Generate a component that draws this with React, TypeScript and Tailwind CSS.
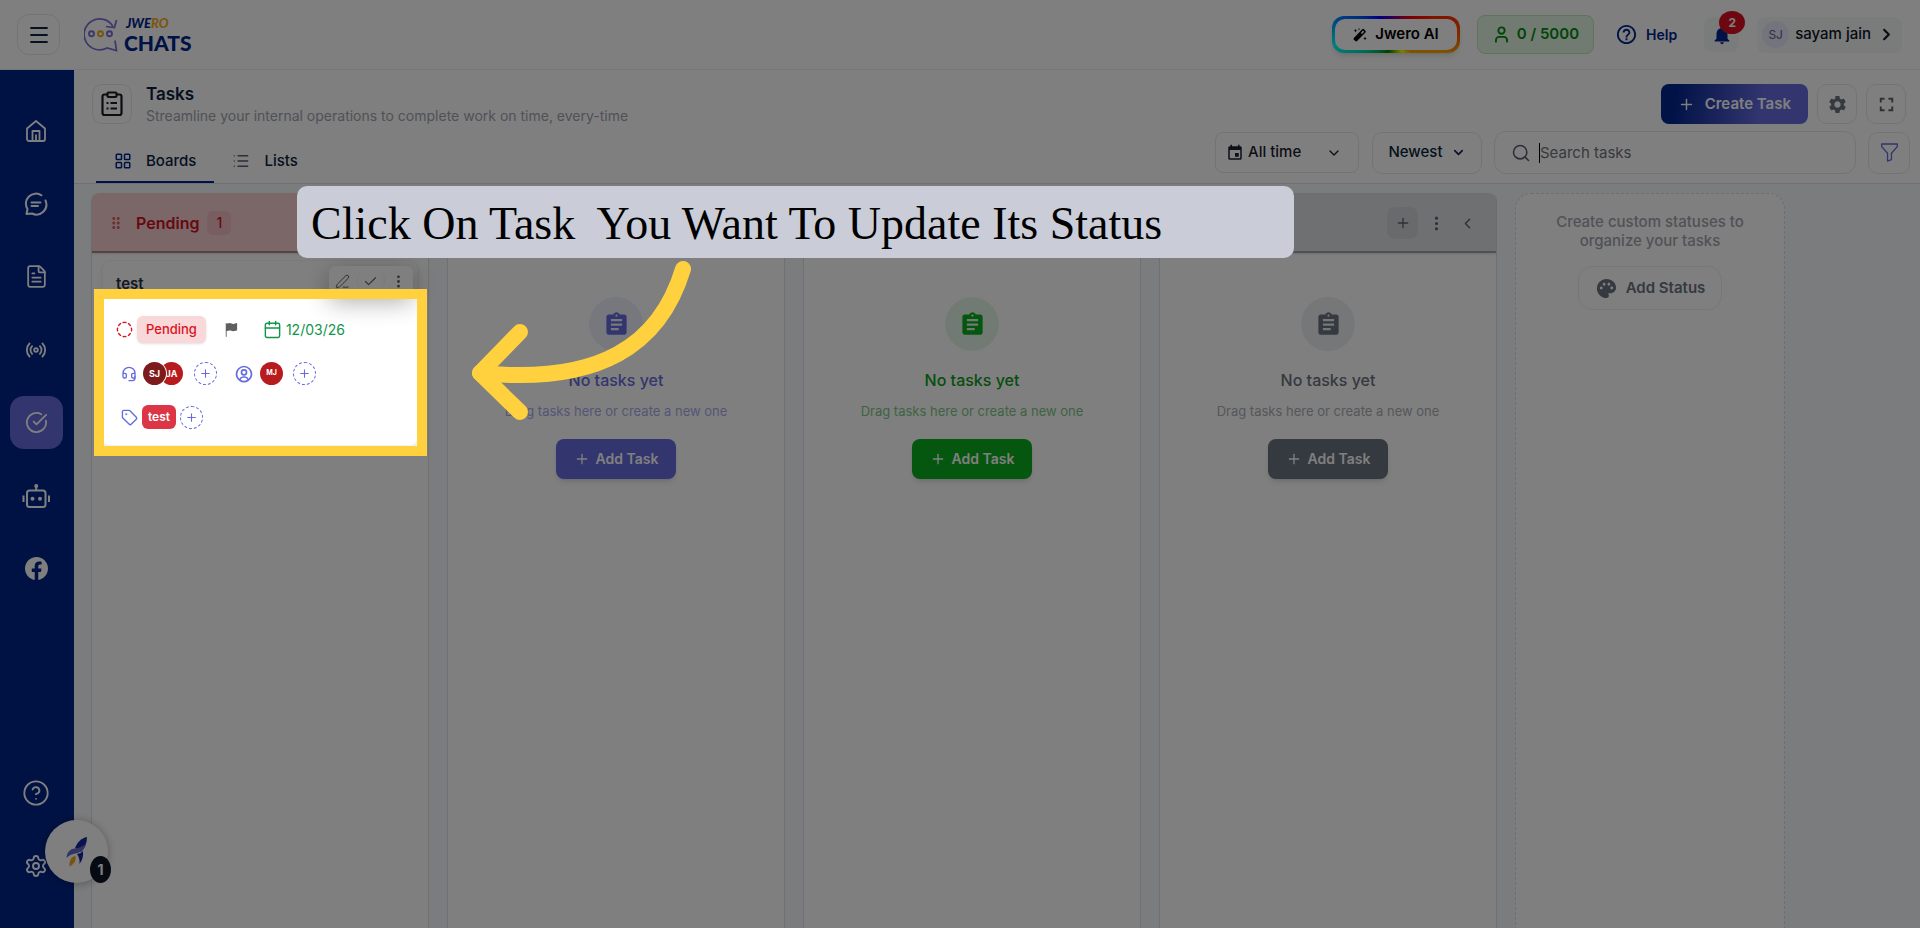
import { useState } from "react";
import type { ReactNode } from "react";
import {
  Calendar,
  Check,
  ChevronDown,
  ChevronLeft,
  ChevronRight,
  CircleCheckBig,
  CircleDashed,
  CircleQuestionMark,
  FileText,
  Headset,
  LayoutGrid,
  List,
  Menu,
  PenLine,
  Plus,
  Radio,
  Search,
  Settings,
  Tag,
  User,
} from "lucide-react";
import { BiUserCircle } from "react-icons/bi";
import { BsFacebook, BsFlagFill, BsFunnel, BsThreeDotsVertical } from "react-icons/bs";
import {
  MdAssignment,
  MdDragIndicator,
  MdEvent,
  MdFullscreen,
  MdHelpOutline,
  MdNotifications,
  MdPalette,
  MdSettings,
} from "react-icons/md";

function HomeIcon() {
  return (
    <svg width="24" height="24" viewBox="0 0 24 24" fill="none" stroke="currentColor" strokeWidth="1.8" strokeLinejoin="round">
      <path d="M3 9.500 12 2l9 7.500V20a2 2 0 0 1-2 2H5a2 2 0 0 1-2-2z" />
      <path d="M8.500 22V12h7v10M12 15.500V22" />
    </svg>
  );
}

function ChatIcon() {
  return (
    <svg width="24" height="24" viewBox="0 0 24 24" fill="none" stroke="currentColor" strokeWidth="2" strokeLinecap="round" strokeLinejoin="round">
      <path d="M21.500 8.500A10 10 0 0 1 8 21.500L2.500 22 3.500 17A10 10 0 0 1 17.500 3.300" />
      <path d="M7.500 10.500h9M7.500 14h6.500" />
    </svg>
  );
}

function BotIcon() {
  return (
    <svg width="28" height="26" viewBox="0 0 28 26" fill="none" stroke="currentColor" strokeWidth="2">
      <rect x="5" y="7.500" width="18.500" height="16.500" rx="2.500" />
      <path d="M14.200 7V3.500M1.500 12.500V19M27 12.500V19" />
      <circle cx="14.200" cy="3" r="1" fill="currentColor" />
      <circle cx="10.500" cy="15.700" r="1" fill="currentColor" />
      <circle cx="18" cy="15.700" r="1" fill="currentColor" />
    </svg>
  );
}

function WandIcon() {
  return (
    <svg width="14" height="14" viewBox="0 0 14 14" fill="currentColor">
      <path d="M9.200 1.300a1.300 1.300 0 0 1 1.800 0l1.400 1.400a1.300 1.300 0 0 1 0 1.800l-8.300 8.600a1.300 1.300 0 0 1-1.800 0L.9 11.700a1.300 1.300 0 0 1 0-1.800zM10 2.600 7.800 4.900l1.200 1.200 2.200-2.300z" fillRule="evenodd" />
      <path d="m2.500.8.500 1.400 1.400.5-1.400.5-.5 1.400L2 3.200.6 2.700 2 2.200zM12 8.500l.5 1.500 1.400.5-1.400.5-.5 1.500-.5-1.500-1.400-.5 1.400-.5zM6 0l.3.8.8.3-.8.3L6 2.200l-.3-.8-.8-.3.8-.3z" />
    </svg>
  );
}

function ClipboardIcon() {
  return (
    <svg width="24" height="26" viewBox="0 0 24 26" fill="none" stroke="currentColor" strokeWidth="2.200" strokeLinejoin="round">
      <path d="M7 3.500H4.500a2 2 0 0 0-2 2V22a2 2 0 0 0 2 2h15a2 2 0 0 0 2-2V5.500a2 2 0 0 0-2-2H17" />
      <rect x="7.500" y="1.500" width="9" height="4.500" rx="1" />
      <path d="M6.500 12h2M6.500 17.500h2M10.500 12H17M10.500 17.500H17" />
    </svg>
  );
}

function Logo() {
  return (
    <a href="#" className="flex items-center gap-1.5" aria-label="Jwero Chats">
      <svg width="34" height="35" viewBox="0 0 34 35" fill="none" stroke="#7a70d8" strokeWidth="1.700">
        <path d="M29 9.500A15.500 15.500 0 1 0 23 31l9.500 2.500L31 23.500" />
        <path d="m22 9.500 8.500 1L32.500 3" />
        <circle cx="7.500" cy="16.700" r="2.500" strokeWidth="1.900" />
        <circle cx="16.500" cy="16.700" r="2.500" stroke="#f0a91b" strokeWidth="1.900" />
        <circle cx="25.500" cy="16.700" r="2.500" strokeWidth="1.900" />
      </svg>
      <span className="font-[Lato,sans-serif] font-black text-[#00248c]">
        <span className="block pl-0.5 text-[13px] leading-4 italic">
          JWE<span className="text-[#f5ad1c]">RO</span>
        </span>
        <span className="block text-[21px] leading-6">CHATS</span>
      </span>
    </a>
  );
}

const navItems = [
  { label: "Home", icon: <HomeIcon /> },
  { label: "Chats", icon: <ChatIcon /> },
  { label: "Templates", icon: <FileText size={25} strokeWidth={1.700} /> },
  { label: "Broadcast", icon: <Radio size={22} /> },
  { label: "Tasks", icon: <CircleCheckBig size={23} strokeWidth={1.900} /> },
  { label: "Bots", icon: <BotIcon /> },
  { label: "Facebook", icon: <BsFacebook size={23} /> },
];

const footerItems = [
  { label: "Help", icon: <CircleQuestionMark size={28} strokeWidth={1.600} /> },
  { label: "Settings", icon: <Settings size={24} strokeWidth={1.900} /> },
];

function NavButton({ label, icon, active = false }: { label: string; icon: ReactNode; active?: boolean }) {
  return (
    <button
      type="button"
      aria-label={label}
      className={`flex h-[53px] w-[53px] items-center justify-center rounded-[14px] ${active ? "bg-[#666bde]" : ""}`}
    >
      {icon}
    </button>
  );
}

function Sidebar() {
  return (
    <nav className="flex w-[74px] shrink-0 flex-col items-center justify-between bg-[#002488] pt-[34px] pr-0.5 pb-9 text-white">
      <div className="flex flex-col gap-5">
        {navItems.map((item) => (
          <NavButton key={item.label} {...item} active={item.label === "Tasks"} />
        ))}
      </div>
      <div className="flex flex-col gap-5">
        {footerItems.map((item) => (
          <NavButton key={item.label} {...item} />
        ))}
      </div>
    </nav>
  );
}

function TopBar() {
  return (
    <header className="flex h-[70px] shrink-0 items-center justify-between border-b border-[#eceef0] pr-[18px] pl-[17px]">
      <div className="flex items-center gap-6">
        <button type="button" aria-label="Menu" className="flex h-[41px] w-[43px] items-center justify-center rounded-xl border border-gray-200 text-[#0b2545]">
          <Menu size={24} strokeWidth={1.800} />
        </button>
        <Logo />
      </div>
      <div className="flex items-center">
        <button
          type="button"
          className="h-[37px] rounded-xl bg-[conic-gradient(from_45deg,#f00_0deg,#ff4500_40deg,#ffa500_65deg,#ffa500_95deg,#ff0_115deg,#008000_160deg,#00ffff_215deg,#0080ff_240deg,#00f_270deg,#f00_360deg)] p-[3px] shadow-md"
        >
          <span className="flex h-full items-center gap-2 rounded-[10px] bg-white px-[18px] text-[15px] font-semibold text-black">
            <WandIcon />
            Jwero AI
          </span>
        </button>
        <div className="ml-[17px] flex h-[39px] items-center gap-1.5 rounded-lg border border-[#b9e6bd] bg-[#e2f7e4] px-[14px] text-[15px] font-semibold text-[#048a0c]">
          <User size={19} strokeWidth={2.400} />
          0 / 5000
        </div>
        <a href="#" className="ml-[21px] flex items-center gap-2 text-sm font-semibold text-[#00248c]">
          <MdHelpOutline size={23} />
          Help
        </a>
        <button type="button" aria-label="Notifications" className="relative ml-[27px] flex size-[35px] items-center justify-center rounded-lg bg-[#f4f8f8] text-[#00248c]">
          <MdNotifications size={22} />
          <span className="absolute -top-1.5 -right-1.5 flex h-[23px] w-[26px] items-center justify-center rounded-[50%] bg-[#dc1020] text-xs font-bold text-white">
            2
          </span>
        </button>
        <button type="button" className="ml-[18px] flex h-9 items-center gap-1.5 rounded-lg bg-[#f4f8f8] pr-1.5 pl-[5px] text-[15px] font-medium text-[#0b1526]">
          <span className="flex size-[27px] items-center justify-center rounded-full bg-[#e6e8fa] text-xs font-normal text-[#5a6180]">SJ</span>
          sayam jain
          <ChevronRight size={19} strokeWidth={2.600} />
        </button>
      </div>
    </header>
  );
}

const iconButton = "flex items-center justify-center rounded-[10px] border border-gray-200";

function PageHeader() {
  const [query, setQuery] = useState("");

  return (
    <div className="flex h-[114px] shrink-0 justify-between border-b border-[#dcdfe6] pl-[18px]">
      <div className="flex flex-col justify-between pt-3.5">
        <div className="flex items-start gap-3.5">
          <div className="flex size-10 items-center justify-center rounded-[10px] border border-gray-200 text-[#1b1d22]">
            <ClipboardIcon />
          </div>
          <div>
            <h1 className="text-[17px] leading-5 font-semibold text-[#0b1f3f]">Tasks</h1>
            <p className="text-sm leading-6 text-[#a0a3ad]">Streamline your internal operations to complete work on time, every-time</p>
          </div>
        </div>
        <div className="ml-1 flex text-[15px] font-medium text-[#0b1f3f]">
          <button type="button" className="flex h-11 items-center gap-3.5 border-b-2 border-[#00248c] px-[18px] pt-0.5">
            <LayoutGrid size={18} className="text-[#00248c]" />
            Boards
          </button>
          <button type="button" className="flex h-11 items-center gap-3.5 px-[18px]">
            <List size={18} strokeWidth={1.700} className="text-[#585c70]" />
            Lists
          </button>
        </div>
      </div>
      <div className="flex flex-col gap-[7px] pt-3.5">
        <div className="flex justify-end gap-[9px] pr-3.5">
          <button
            type="button"
            className="flex h-10 items-center gap-2.5 rounded-lg bg-[linear-gradient(100deg,#00248c_10%,#666bde_68%)] px-[17px] text-[15px] font-semibold text-white"
          >
            <Plus size={17} />
            Create Task
          </button>
          <button type="button" aria-label="Task settings" className={`${iconButton} size-10 text-[#6b7280]`}>
            <MdSettings size={21} />
          </button>
          <button type="button" aria-label="Full screen" className={`${iconButton} size-10 text-[#5b6068]`}>
            <MdFullscreen size={23} />
          </button>
        </div>
        <div className="flex items-center gap-3 pr-2.5">
          <button type="button" className="flex h-[41px] w-[144px] items-center justify-between rounded-lg border border-gray-200 px-2.5 text-[15px] font-medium text-[#1b2030]">
            <span className="flex items-center gap-1">
              <MdEvent size={18} />
              All time
            </span>
            <ChevronDown size={16} className="mr-1.5" />
          </button>
          <button type="button" className={`${iconButton} ml-px h-[42px] w-[110px] gap-2 text-[15px] font-medium text-[#0b1f3f]`}>
            Newest
            <ChevronDown size={15} strokeWidth={2.500} />
          </button>
          <label className="flex h-[43px] w-[362px] items-center gap-2 rounded-xl border border-gray-200 pr-3 pl-4">
            <Search size={20} strokeWidth={1.900} className="text-[#5d5b78]" />
            <span className="flex grow items-center">
              <span className="h-5 w-px bg-black" />
              <input
                type="text"
                aria-label="Search tasks"
                value={query}
                onChange={(e) => setQuery(e.target.value)}
                placeholder="Search tasks"
                className="h-8 w-full text-[15px] leading-6 outline-none placeholder:text-[#70737b]"
              />
            </span>
          </label>
          <button type="button" aria-label="Filter" className={`${iconButton} size-[42px] text-[#666bde]`}>
            <BsFunnel size={21} />
          </button>
        </div>
      </div>
    </div>
  );
}

function ColumnActions() {
  return (
    <div className="flex items-center text-[#5b616c]">
      <button type="button" aria-label="Add task" className="flex h-8 w-[31px] items-center justify-center rounded-lg bg-black/5">
        <Plus size={16} />
      </button>
      <button type="button" aria-label="More" className="ml-2.5">
        <BsThreeDotsVertical size={17} />
      </button>
      <button type="button" aria-label="Collapse" className="ml-3.5">
        <ChevronLeft size={17} />
      </button>
    </div>
  );
}

function AddPerson({ label }: { label: string }) {
  return (
    <button type="button" aria-label={label} className="flex size-[23px] items-center justify-center rounded-full border border-dashed border-[#666bde] text-[#666bde]">
      <Plus size={13} />
    </button>
  );
}

function TaskCard() {
  return (
    <article className="relative mx-2.5 mt-[7px] rounded-lg border border-gray-100 px-[13px] pt-[13px] pb-4 shadow-md">
      <h3 className="text-[15px] leading-5 font-semibold text-[#283044]">test</h3>
      <div className="absolute top-[5px] right-1 flex h-[30px] w-[84px] items-center justify-between rounded-md bg-white pr-[7px] pl-1.5 text-[#5d6066] shadow-[0_6px_24px_rgba(0,0,0,0.32)]">
        <button type="button" aria-label="Edit">
          <PenLine size={15} strokeWidth={1.600} />
        </button>
        <button type="button" aria-label="Complete" className="flex size-7 items-center justify-center rounded-full border-x border-gray-100">
          <Check size={15} strokeWidth={1.700} />
        </button>
        <button type="button" aria-label="More">
          <BsThreeDotsVertical size={15} />
        </button>
      </div>

      <div className="mt-[22px] flex items-center text-sm">
        <CircleDashed size={17} className="text-[#d91420]" />
        <button type="button" className="ml-1 h-[27px] rounded-md bg-[#f9d8da] px-[9px] text-[13px] font-medium text-[#d91420] shadow-sm">
          Pending
        </button>
        <BsFlagFill size={14} className="ml-[18px] text-[#5f5f5f]" />
        <span className="ml-[25px] flex items-center gap-1 text-[#12954c]">
          <Calendar size={19} strokeWidth={1.800} />
          12/03/26
        </span>
      </div>

      <div className="mt-[19px] ml-[5px] flex items-center text-[#666bde]">
        <Headset size={16} />
        <div className="ml-1.5 flex text-[9px] font-bold text-white">
          <span className="z-10 flex size-[23px] items-center justify-center rounded-full bg-[#7d1a1c] ring-1 ring-white">SJ</span>
          <span className="-ml-1.5 flex size-[23px] items-center justify-center rounded-full bg-[#b81b1d]">JA</span>
        </div>
        <div className="ml-[11px]">
          <AddPerson label="Add agent" />
        </div>
        <BiUserCircle size={20} className="ml-[17px]" />
        <span className="ml-1.5 flex size-[23px] items-center justify-center rounded-full bg-[#b81b1d] text-[7px] font-bold text-white">MJ</span>
        <div className="ml-2.5">
          <AddPerson label="Add customer" />
        </div>
      </div>

      <div className="mt-5 ml-[5px] flex items-center gap-1 text-[#666bde]">
        <Tag size={17} strokeWidth={1.900} />
        <span className="flex h-6 items-center rounded-md bg-[#dc3545] px-1.5 text-xs font-semibold text-white">test</span>
        <AddPerson label="Add tag" />
      </div>
    </article>
  );
}

interface Tone {
  head: string;
  circle: string;
  title: string;
  hint: string;
  button: string;
}

const emptyColumns: Tone[] = [
  {
    head: "bg-[#dfe0f8] border-[#9da0e6]",
    circle: "bg-[#eff0fc] text-[#666bde]",
    title: "text-[#666bde]",
    hint: "text-[#a8abec]",
    button: "bg-[#666bde]",
  },
  {
    head: "bg-[#d5f0d8] border-[#7cc683]",
    circle: "bg-[#e4f6e6] text-[#0bac1c]",
    title: "text-[#0b9c1a]",
    hint: "text-[#7cc683]",
    button: "bg-[#0bac1c]",
  },
  {
    head: "bg-[#dfe1e4] border-[#9fa3a9]",
    circle: "bg-[#edeef0] text-[#6b7280]",
    title: "text-[#6b7280]",
    hint: "text-[#aaaeb5]",
    button: "bg-[#6b7280]",
  },
];

const columnBox = "flex w-[338px] shrink-0 flex-col rounded-t-lg border-x border-[#dfe2e8] bg-white";
const columnHead = "flex h-[60px] shrink-0 items-center justify-between rounded-t-lg border-b-2 pt-0.5 pr-5 pl-[15px] shadow-sm";

function EmptyColumn({ tone }: { tone: Tone }) {
  return (
    <section className={columnBox}>
      <div className={`${columnHead} ${tone.head}`}>
        <MdDragIndicator size={18} className={tone.title} />
        <ColumnActions />
      </div>
      <div className="mt-11 flex flex-col items-center">
        <div className={`flex size-[54px] items-center justify-center rounded-full ${tone.circle}`}>
          <MdAssignment size={27} />
        </div>
        <p className={`mt-[17px] text-base leading-6 font-medium ${tone.title}`}>No tasks yet</p>
        <p className={`mt-[9px] text-[13px] leading-5 ${tone.hint}`}>Drag tasks here or create a new one</p>
        <button type="button" className={`mt-[18px] flex h-10 w-[120px] items-center justify-center gap-1.5 rounded-lg text-sm font-semibold text-white shadow-md ${tone.button}`}>
          <Plus size={16} />
          Add Task
        </button>
      </div>
    </section>
  );
}

function Board() {
  return (
    <div className="flex grow gap-[18px] bg-[#f7f9fc] pt-[9px] pl-[17px]">
      <section className={columnBox}>
        <div className={`${columnHead} border-[#a9888b] bg-[#f7cdd0] text-[#cc1320]`}>
          <div className="flex items-center">
            <MdDragIndicator size={18} className="opacity-60" />
            <h2 className="ml-[11px] text-base font-semibold">Pending</h2>
            <span className="ml-2 flex size-6 items-center justify-center rounded-md bg-[#f0bcc0] text-sm font-medium">1</span>
          </div>
          <ColumnActions />
        </div>
        <TaskCard />
      </section>
      {emptyColumns.map((tone) => (
        <EmptyColumn key={tone.button} tone={tone} />
      ))}
      <section className="flex w-[270px] shrink-0 flex-col items-center rounded-t-2xl border border-b-0 border-dashed border-[#d9dce2] bg-white px-8 pt-[18px]">
        <p className="text-center text-[15px] leading-[19px] font-medium text-[#a0a4ae]">Create custom statuses to organize your tasks</p>
        <button type="button" className="mt-4 flex h-11 items-center gap-2 rounded-[14px] border border-[#eceef1] px-4 text-[15px] font-semibold text-[#6b7280]">
          <MdPalette size={23} />
          Add Status
        </button>
      </section>
    </div>
  );
}

function LaunchBubble() {
  return (
    <button type="button" aria-label="Getting started" className="absolute bottom-[45px] left-[45px] flex size-[63px] items-center justify-center rounded-full bg-white shadow-[0_1px_10px_rgba(0,0,0,0.3)]">
      <svg width="22" height="32" viewBox="0 0 22 32">
        <path d="M21 1C15 2 11 7 9 12l6 4c4-4 6-9 6-15z" fill="#1527a0" />
        <path d="M20 7C17 11 13 12 9 12.500 4 13 1 16 .5 22c3-3.500 6-4 9-4.500C15 16.500 19 13 20 7z" fill="#6468c8" />
        <path d="M11 18c3-.5 4.500-1.500 6-3 .5 5-.5 9-3.500 13 .5-4-.5-7-2.500-10z" fill="#1527a0" />
        <path d="M9.500 20c-4 .5-6.500 4-6 10.500C7.500 28.500 10.500 25 9.500 20z" fill="#f5a81c" />
      </svg>
      <span className="absolute right-[-3px] bottom-0 flex h-[27px] w-[21px] items-center justify-center rounded-[50%] bg-[#0b1526] text-sm font-bold text-white">
        1
      </span>
    </button>
  );
}

// Tutorial step: dims everything but the highlighted task, then labels it
function Walkthrough() {
  return (
    <>
      <div className="absolute top-[289px] left-[94px] h-[167px] w-[333px] border-[10px] border-[#ffd13f] shadow-[0_0_0_3000px_rgba(0,0,0,0.5)]" />
      <svg className="absolute top-[250px] left-[460px]" width="240" height="180" viewBox="460 250 240 180" fill="none" stroke="#ffd13f" strokeWidth="16" strokeLinecap="round" strokeLinejoin="round">
        <path d="M683 269C660 345 600 385 480 373" />
        <path d="M520 332 480 373l40 39" />
      </svg>
      <p className="absolute top-[186px] left-[297px] h-[72px] w-[997px] rounded-[10px] bg-[#cacdd7] px-3.5 font-['Liberation_Serif',serif] text-[46px] leading-[76px] whitespace-pre text-black">
        Click On Task  You Want To Update Its Status
      </p>
    </>
  );
}

export default function App() {
  return (
    <div className="relative flex h-screen flex-col overflow-hidden bg-white font-[Inter,sans-serif]">
      <TopBar />
      <div className="flex min-h-0 grow">
        <Sidebar />
        <main className="flex min-w-0 grow flex-col overflow-hidden">
          <PageHeader />
          <Board />
        </main>
      </div>
      <LaunchBubble />
      <Walkthrough />
    </div>
  );
}
